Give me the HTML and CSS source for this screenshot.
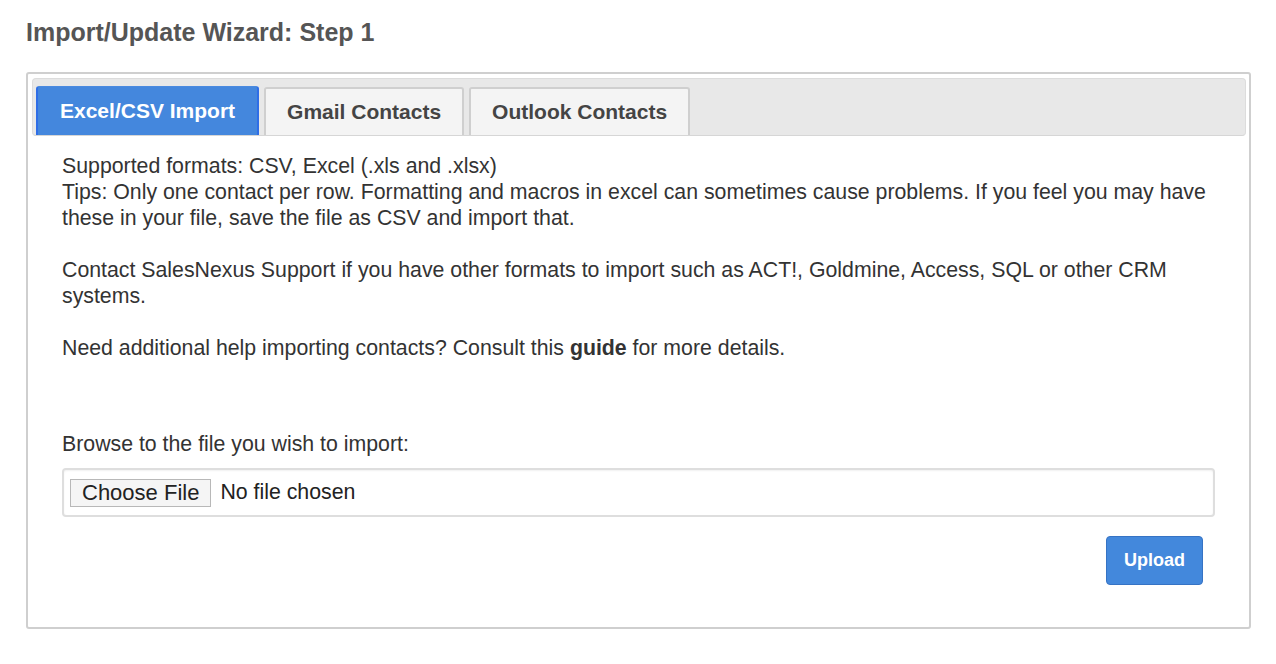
FILE: index.html
```html
<!DOCTYPE html>
<html>
<head>
<meta charset="utf-8">
<link rel="stylesheet" href="styles.css">
</head>
<body>
<h1 class="title">Import/Update Wizard: Step 1</h1>
<div class="wizard">
  <div class="tabs">
    <div class="tab active">Excel/CSV Import</div>
    <div class="tab">Gmail Contacts</div>
    <div class="tab">Outlook Contacts</div>
  </div>
  <div class="content">
    <p class="info">Supported formats: CSV, Excel (.xls and .xlsx)<br>Tips: Only one contact per row. Formatting and macros in excel can sometimes cause problems. If you feel you may have these in your file, save the file as CSV and import that.</p>
    <p class="info">Contact SalesNexus Support if you have other formats to import such as ACT!, Goldmine, Access, SQL or other CRM systems.</p>
    <p class="info">Need additional help importing contacts? Consult this <b>guide</b> for more details.</p>
    <div class="label">Browse to the file you wish to import:</div>
    <div class="file-box">
      <span class="choose">Choose File</span>
      <span class="nofile">No file chosen</span>
    </div>
    <div class="actions">
      <button class="upload">Upload</button>
    </div>
  </div>
</div>
</body>
</html>
```

FILE: styles.css
```css
html, body {
  margin: 0;
  padding: 0;
  background: #fff;
}
body {
  font-family: "Liberation Sans", Arial, sans-serif;
  color: #333;
  padding: 0 25px 0 26px;
}
.title {
  margin: 0;
  padding-top: 17px;
  height: 72px;
  box-sizing: border-box;
  font-size: 25px;
  line-height: 30px;
  font-weight: bold;
  color: #555;
}
.wizard {
  border: 2px solid #cfcfcf;
  border-radius: 3px;
  padding: 4px 3px 44px 4px;
  height: 557px;
  box-sizing: border-box;
}
.tabs {
  display: flex;
  align-items: flex-end;
  gap: 5px;
  height: 58px;
  box-sizing: border-box;
  background: #e8e8e8;
  border: 1px solid #dcdcdc;
  border-bottom-color: #d6d6d6;
  border-radius: 4px;
  padding: 0 3px;
}
.tab {
  height: 48px;
  box-sizing: border-box;
  padding: 0 21px;
  display: flex;
  align-items: center;
  font-size: 21px;
  font-weight: bold;
  color: #444;
  background: #f4f4f4;
  border: 2px solid #cfcfcf;
  border-bottom: none;
  border-radius: 3px 3px 0 0;
}
.tab.active {
  height: 49px;
  padding: 0 22px;
  background: #4487dd;
  color: #fff;
  border: 2px solid #2f6ee6;
  border-top: 1px solid #4a8ae0;
  border-bottom: none;
}
.content {
  padding: 17px 31px 0 30px;
}
.info {
  margin: 0 0 26px 0;
  font-size: 21.3px;
  line-height: 26px;
  color: #333;
}
.info b {
  font-weight: bold;
}
.label {
  margin-top: 70px;
  font-size: 21.3px;
  line-height: 26px;
  color: #333;
}
.file-box {
  margin-top: 11px;
  height: 49px;
  box-sizing: border-box;
  border: 2px solid #dedede;
  border-radius: 4px;
  box-shadow: inset 0 1px 2px rgba(0,0,0,0.06);
  display: flex;
  align-items: center;
  padding-left: 6px;
  font-size: 21.3px;
  color: #222;
}
.choose {
  height: 28px;
  box-sizing: border-box;
  border: 1px solid #b8b8b8;
  background: #f5f5f5;
  padding: 0 11px;
  font-size: 22px;
  display: flex;
  align-items: center;
  margin-right: 9px;
}
.actions {
  display: flex;
  justify-content: flex-end;
  padding: 19px 12px 0 0;
}
.upload {
  width: 97px;
  height: 49px;
  background: #4388dc;
  border: 1px solid #3673c4;
  border-radius: 4px;
  color: #fff;
  font-family: "Liberation Sans", Arial, sans-serif;
  font-size: 18px;
  font-weight: bold;
  padding: 0;
}
```
